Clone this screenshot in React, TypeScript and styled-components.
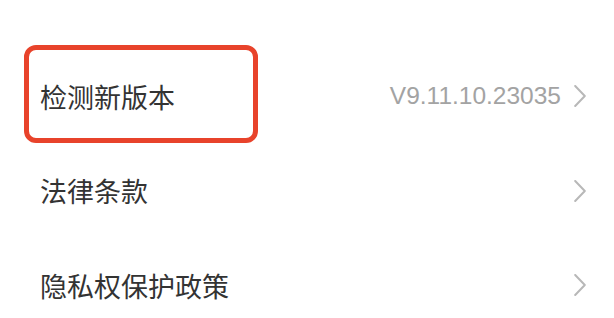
import styled, { createGlobalStyle } from "styled-components";

const GlobalStyle = createGlobalStyle`
  html, body {
    margin: 0;
    padding: 0;
    background: #ffffff;
  }
  body {
    font-family: "Noto Sans CJK SC", "Noto Sans", sans-serif;
  }
`;

const List = styled.div`
  width: 614px;
  height: 318px;
  padding-top: 49px;
  box-sizing: border-box;
  background: #ffffff;
  overflow: hidden;
`;

const Row = styled.div`
  position: relative;
  height: 94.5px;
  display: flex;
  align-items: center;
  justify-content: space-between;
  padding: 0 28px 0 40px;
  box-sizing: border-box;
`;

const Label = styled.span`
  font-family: "Noto Sans CJK SC", sans-serif;
  font-size: 27px;
  color: #333333;
  line-height: 1;
`;

const Right = styled.div`
  display: flex;
  align-items: center;
  gap: 13px;
`;

const Value = styled.span`
  font-family: "Liberation Sans", Arial, sans-serif;
  font-size: 24.5px;
  color: #a3a3a3;
  line-height: 1;
`;

const Highlight = styled.div`
  position: absolute;
  left: 24px;
  top: -4px;
  width: 234px;
  height: 98px;
  border: 5px solid #e8432b;
  border-radius: 12px;
  box-sizing: border-box;
  pointer-events: none;
`;

const Chevron = () => (
  <svg width="12" height="22" viewBox="0 0 12 22">
    <path
      d="M1.2 1 L10.8 11 L1.2 21"
      fill="none"
      stroke="#b8b8b8"
      strokeWidth="2"
      strokeLinecap="round"
      strokeLinejoin="round"
    />
  </svg>
);

const items = [
  { label: "检测新版本", value: "V9.11.10.23035", highlight: true },
  { label: "法律条款" },
  { label: "隐私权保护政策" },
];

const App = () => {
  return (
    <>
      <GlobalStyle />
      <List>
        {items.map((item) => (
          <Row key={item.label}>
            {item.highlight && <Highlight />}
            <Label>{item.label}</Label>
            <Right>
              {item.value && <Value>{item.value}</Value>}
              <Chevron />
            </Right>
          </Row>
        ))}
      </List>
    </>
  );
};

export default App;
